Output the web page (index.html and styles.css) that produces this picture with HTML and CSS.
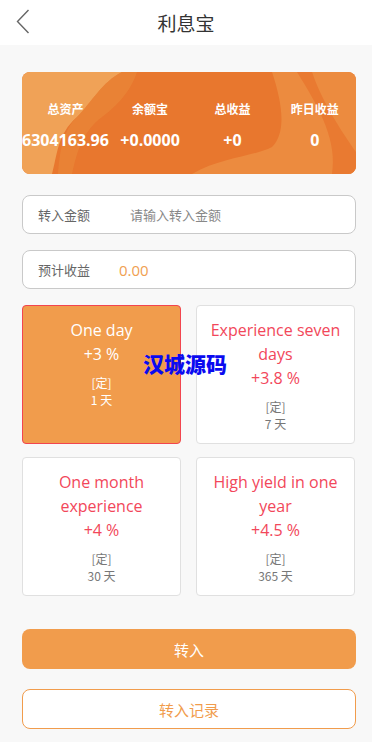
FILE: index.html
```html
<!DOCTYPE html>
<html lang="zh">
<head>
<meta charset="utf-8">
<title>利息宝</title>
<link rel="stylesheet" href="styles.css">
</head>
<body>
<header class="topbar">
  <svg class="back" width="14" height="26" viewBox="0 0 14 26"><path d="M12.5 1 L1.5 12.5 L12.5 24" fill="none" stroke="#666" stroke-width="1.4"/></svg>
  <h1 class="title">利息宝</h1>
</header>
<main class="content">
  <section class="banner">
    <svg class="banner-bg" viewBox="0 0 334 102" preserveAspectRatio="none">
      <rect width="334" height="102" fill="#e8772e"/>
      <path d="M0 0 H100 C80 10 70 30 55 45 C35 62 35 85 30 102 H0 Z" fill="#f0a257"/>
      <path d="M100 0 C80 10 70 30 55 45 C40 60 38 80 36 102 H50 C55 80 60 60 80 45 C100 30 110 15 115 0 Z" fill="#ea8a3a" opacity="0.6"/>
      <path d="M170 102 C200 85 230 85 250 75 C265 60 260 30 250 0 H334 V102 Z" fill="#ec8b3f"/>
      <path d="M290 0 C300 30 320 60 334 80 V102 H310 C315 70 300 40 275 0 Z" fill="#e97a31"/>
    </svg>
    <div class="stats">
      <div class="stat"><div class="stat-label">总资产</div><div class="stat-value">6304163.96</div></div>
      <div class="stat"><div class="stat-label">余额宝</div><div class="stat-value">+0.0000</div></div>
      <div class="stat"><div class="stat-label">总收益</div><div class="stat-value">+0</div></div>
      <div class="stat"><div class="stat-label">昨日收益</div><div class="stat-value">0</div></div>
    </div>
  </section>

  <div class="field">
    <span class="field-label">转入金额</span>
    <span class="field-placeholder">请输入转入金额</span>
  </div>
  <div class="field">
    <span class="field-label">预计收益</span>
    <span class="field-amount">0.00</span>
  </div>

  <div class="plans">
    <div class="plan active">
      <div class="plan-name">One day</div>
      <div class="plan-rate">+3 %</div>
      <div class="plan-type">[定]</div>
      <div class="plan-days">1 天</div>
    </div>
    <div class="plan">
      <div class="plan-name">Experience seven days</div>
      <div class="plan-rate">+3.8 %</div>
      <div class="plan-type">[定]</div>
      <div class="plan-days">7 天</div>
    </div>
    <div class="plan">
      <div class="plan-name">One month experience</div>
      <div class="plan-rate">+4 %</div>
      <div class="plan-type">[定]</div>
      <div class="plan-days">30 天</div>
    </div>
    <div class="plan">
      <div class="plan-name">High yield in one year</div>
      <div class="plan-rate">+4.5 %</div>
      <div class="plan-type">[定]</div>
      <div class="plan-days">365 天</div>
    </div>
    <div class="watermark">汉城源码</div>
  </div>

  <button class="btn btn-primary">转入</button>
  <button class="btn btn-outline">转入记录</button>
</main>
</body>
</html>
```

FILE: styles.css
```css
* { box-sizing: border-box; }
html, body { margin: 0; padding: 0; }
body {
  background: #f8f8f8;
  font-family: "Noto Sans CJK SC", "Open Sans", "Noto Sans", sans-serif;
  width: 372px;
  min-height: 742px;
}
.topbar {
  position: relative;
  height: 45px;
  background: #fff;
  display: flex;
  align-items: center;
  justify-content: center;
}
.back {
  position: absolute;
  left: 16px;
  top: 9px;
}
.title {
  margin: 0;
  font-size: 19px;
  font-weight: 400;
  color: #333;
  line-height: 1;
}
.content {
  padding: 27px 16px 0 22px;
  display: flex;
  flex-direction: column;
}
.banner {
  position: relative;
  height: 102px;
  border-radius: 8px;
  overflow: hidden;
  color: #fff;
}
.banner-bg {
  position: absolute;
  inset: 0;
  width: 100%;
  height: 100%;
}
.stats {
  position: relative;
  display: grid;
  grid-template-columns: repeat(4, 1fr);
  padding-top: 28px;
}
.stat { text-align: center; }
.stat-label {
  font-size: 12px;
  font-weight: 700;
  line-height: 18px;
}
.stat-value {
  margin-top: 12px;
  font-size: 16px;
  font-weight: 700;
  line-height: 20px;
  white-space: nowrap;
  font-family: "Open Sans", "Noto Sans CJK SC", sans-serif;
}
.field {
  margin-top: 21px;
  height: 39px;
  background: #fff;
  border: 1px solid #c9c9c9;
  border-radius: 8px;
  display: flex;
  align-items: center;
  padding-left: 15px;
  font-size: 13px;
}
.field + .field { margin-top: 16px; }
.field-label { color: #666; width: 92px; }
.field-placeholder { color: #888; }
.field-amount {
  color: #f0a050;
  font-size: 15px;
  margin-left: -11px;
  font-family: "Open Sans", sans-serif;
}
.plans {
  position: relative;
  margin-top: 16px;
  display: grid;
  grid-template-columns: 159px 159px;
  column-gap: 15px;
  row-gap: 13px;
}
.plan {
  height: 139px;
  background: #fff;
  border: 1px solid #e0e0e0;
  border-radius: 4px;
  text-align: center;
  padding: 12px 10px 0;
  color: #f2475a;
}
.plan.active {
  background: #f19c4c;
  border-color: #f2454f;
  color: #fff;
}
.plan-name {
  font-size: 16px;
  line-height: 24px;
  font-family: "Open Sans", "Noto Sans CJK SC", sans-serif;
}
.plan-rate {
  font-size: 16px;
  line-height: 24px;
  font-family: "Open Sans", "Noto Sans CJK SC", sans-serif;
}
.plan-type {
  margin-top: 8px;
  font-size: 12px;
  line-height: 17px;
  color: #777;
}
.plan-days {
  font-size: 12px;
  line-height: 17px;
  color: #777;
}
.plan.active .plan-type,
.plan.active .plan-days { color: #fff; }
.watermark {
  position: absolute;
  left: 121px;
  top: 46px;
  font-size: 21px;
  font-weight: 900;
  color: #0a0af0;
  line-height: 24px;
  pointer-events: none;
}
.btn {
  display: block;
  width: 334px;
  height: 40px;
  border-radius: 8px;
  font-family: "Noto Sans CJK SC", sans-serif;
  font-size: 15px;
  cursor: pointer;
}
.btn-primary {
  margin-top: 33px;
  background: #f19c4c;
  border: none;
  color: #fff;
}
.btn-outline {
  margin-top: 20px;
  background: #fff;
  border: 1px solid #f19c4c;
  color: #f19c4c;
}
```
